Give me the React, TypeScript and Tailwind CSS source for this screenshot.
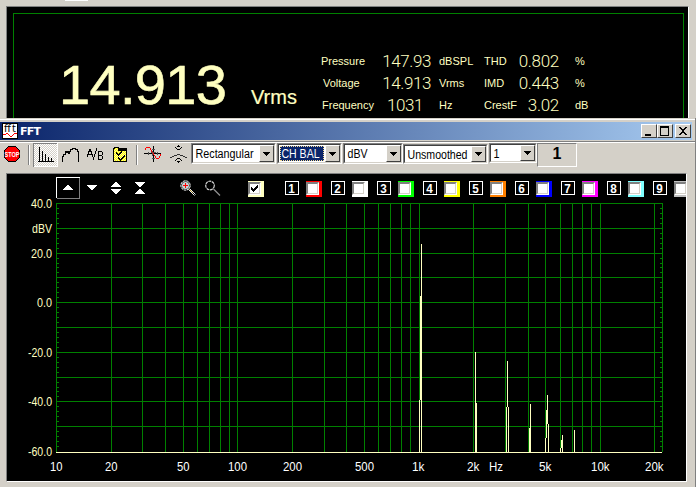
import React from "react";

const SANS = "font-['Liberation_Sans',Arial,sans-serif]";

const readings = [
  ["Pressure", "147.93", "dBSPL", "THD", "0.802", "%"],
  ["Voltage", "14.913", "Vrms", "IMD", "0.443", "%"],
  ["Frequency", "1031", "Hz", "CrestF", "3.02", "dB"],
];

const channels = [
  "bg-[#ff0000]",
  "bg-white",
  "bg-[#00ff00]",
  "bg-[#ffff00]",
  "bg-[#ff8000]",
  "bg-[#0000ff]",
  "bg-[#ff00ff]",
  "bg-[#80ffff]",
  "bg-[#c0c0c0]",
];

function Reading({ row, index }: { row: string[]; index: number }) {
  const inset = ["pl-0", "pl-[2px]", "pl-[1px]"][index];
  return (
    <div className="grid h-[22px] grid-cols-[60px_50px_8px_45px_32px_43px_17px_40px] items-center whitespace-nowrap text-[11px] leading-[22px]">
      <span className={inset}>{row[0]}</span>
      <span className={index === 2 ? "pr-[8px] text-right text-[17px] font-light tracking-[-0.4px] font-['Roboto',sans-serif]" : "text-right text-[17px] font-light tracking-[-0.4px] font-['Roboto',sans-serif]"}>{row[1]}</span>
      <span />
      <span>{row[2]}</span>
      <span>{row[3]}</span>
      <span className="text-right text-[17px] font-light tracking-[-0.3px] font-['Roboto',sans-serif]">{row[4]}</span>
      <span />
      <span className="-ml-px">{row[5]}</span>
    </div>
  );
}

function TitleButton({ children }: { children: React.ReactNode }) {
  return (
    <div className="h-[14px] w-[16px] border border-t-white border-l-white border-r-[#404040] border-b-[#404040] bg-[#d4d0c8]">
      <svg width="14" height="12" viewBox="0 0 14 12" shapeRendering="crispEdges" className="block">
        {children}
      </svg>
    </div>
  );
}

function Combo({ box, label, selected = false }: { box: string; label: React.ReactNode; selected?: boolean }) {
  return (
    <div className={`flex shrink-0 border border-t-[#808080] border-l-[#808080] border-r-white border-b-white ${box}`}>
      <div className="flex min-w-0 flex-1 border border-t-[#404040] border-l-[#404040] border-r-[#d4d0c8] border-b-[#d4d0c8] bg-white">
        <div className={selected ? "m-px flex min-w-0 flex-1 items-center border border-dotted border-[#f5db95] bg-[#0a246a] text-white" : "flex min-w-0 flex-1 items-center pl-[2px] text-black"}>
          {label}
        </div>
        <div className="flex w-[15px] shrink-0 items-center justify-center border border-t-white border-l-white border-r-[#404040] border-b-[#404040] bg-[#d4d0c8]">
          <svg width="7" height="4" viewBox="0 0 7 4" shapeRendering="crispEdges">
            <path d="M0 0h7v1h-1v1h-1v1h-1v1h-1v-1h-1v-1h-1v-1h-1z" />
          </svg>
        </div>
      </div>
    </div>
  );
}

function ComboText({ text, width, size = 12.5 }: { text: string; width: number; size?: number }) {
  return (
    <svg width={width + 1} height="15" className="block shrink-0 overflow-visible">
      <text x="0.5" y="12" fontSize={size} fill="currentColor" textLength={width} lengthAdjust="spacingAndGlyphs">
        {text}
      </text>
    </svg>
  );
}

function CheckSquare({ color, checked = false }: { color: string; checked?: boolean }) {
  return (
    <div className={`h-[16px] w-[16px] shrink-0 pt-px ${color}`}>
      <div className="h-[13px] w-[13px] border border-t-[#808080] border-l-[#808080] border-r-white border-b-white">
        <div className="h-[11px] w-[11px] border border-t-[#808080] border-l-[#808080] border-r-[#d4d0c8] border-b-[#d4d0c8] bg-white">
          {checked && (
            <svg width="9" height="9" viewBox="0 0 9 9" shapeRendering="crispEdges" className="block">
              <path d="M1 3h1v1h1v1h1v-1h1v-1h1v-1h1v-1h1v3h-1v1h-1v1h-1v1h-1v1h-1v-1h-1v-1h-1z" />
            </svg>
          )}
        </div>
      </div>
    </div>
  );
}

function Toolbar() {
  return (
    <div className="flex h-[30px] items-start">
      <svg width="191" height="30" viewBox="0 143 191 30" shapeRendering="crispEdges" className="block shrink-0">
        <defs>
          <pattern id="check" width="2" height="2" patternUnits="userSpaceOnUse">
            <rect width="2" height="2" fill="#d4d0c8" />
            <rect width="1" height="1" fill="#fff" />
            <rect x="1" y="1" width="1" height="1" fill="#fff" />
          </pattern>
          <pattern id="yellow" width="2" height="2" patternUnits="userSpaceOnUse">
            <rect width="2" height="2" fill="#ffff00" />
            <rect width="1" height="1" fill="#fff7a0" />
            <rect x="1" y="1" width="1" height="1" fill="#fff7a0" />
          </pattern>
        </defs>
        <path d="M8.5 146.5h7l4 4v7l-4 4h-7l-4-4v-7z" fill="#f00" stroke="#000" />
        <text x="4.5" y="157" fontSize="8" fontWeight="bold" fill="#fff" textLength="15" lengthAdjust="spacingAndGlyphs">STOP</text>
        <path d="M28.5 145v20M136.5 145v20" stroke="#808080" />
        <path d="M29.5 145v20M137.5 145v20" stroke="#fff" />
        <rect x="33" y="143" width="25" height="24" fill="url(#check)" />
        <path d="M33.5 167v-23.5H57" fill="none" stroke="#808080" />
        <path d="M34 166.5h23.5V144" fill="none" stroke="#fff" />
        <path d="M39.5 147v15M38 161.5h16M42.5 151v11M45.5 154v8M48.5 157v5M51.5 158v4" stroke="#000" fill="none" />
        <path d="M62.5 162v-6h1v-2h2v-3h1v1h1v-1h1v2h1v-2h1v-2h2v-1h3v1h2v2h1v11" fill="none" stroke="#000" />
        <path d="M87.5 157v-3h1v-3h1v-2h1v2h1v3h1v3M88 154.500h4" fill="none" stroke="#000" />
        <path d="M93 157h1v3h-1zM94 154h1v3h-1zM95 151h1v3h-1zM96 148h1v3h-1z" />
        <path d="M98.500 160v-9M98 151.500h4M98 155.500h4M98 159.500h4M102.500 152v3M102.500 156v3" fill="none" stroke="#000" />
        <path d="M113 148h1v-1h5v1h8v14h-14z" />
        <path d="M114 149h1v-1h3v2h8v11h-12z" fill="url(#yellow)" />
        <path d="M118 150h8v1h-8z" />
        <path d="M116 152h1v1h1v1h1v-1h1v-1h1v-1h1v2h-1v1h-1v1h-1v1h-1v-1h-1v-1h-1zM118 157h1v1h1v1h1v-1h1v-1h1v-1h1v-1h1v2h-1v1h-1v1h-1v1h-1v1h-1v-1h-1v-1h-1z" />
        <path d="M153.500 146v16M144 153.500h17" stroke="#000" />
        <path d="M152 149.500h3M152 158.500h3M148.500 152v3M157.500 152v3M152.500 151v5M151 152.500h5" stroke="#505050" />
        <g fill="#f00">
          <path d="M145 148h1v2h-1zM146 147h4v1h-4zM150 148h1v2h-1zM151 150h1v2h-1zM152 152h1v1h-1zM153 153h1v2h-1zM154 155h1v1h-1zM155 156h1v2h-1zM156 158h3v1h-3zM159 156h1v2h-1zM160 154h1v2h-1z" />
        </g>
        <path d="M170 157h2v1h-2zM172 156h2v1h-2zM174 155h3v1h-3zM177 154h3v1h-3zM180 155h3v1h-3zM183 156h2v1h-2zM185 157h2v1h-2z" fill="#303030" />
        <path d="M178 145h1v2h-1zM175 147h1v1h-1zM181 147h1v1h-1zM176 148h1v1h-1zM180 148h1v1h-1zM177 149h3v1h-3zM177 158h3v1h-3zM176 159h1v1h-1zM180 159h1v1h-1zM175 160h1v1h-1zM181 160h1v1h-1zM178 161h1v2h-1zM177 146h3v1h-3zM177 161h3v1h-3z" />
      </svg>
      <Combo box="h-[21px] w-[85px]" label={<ComboText text="Rectangular" width={58} />} />
      <Combo box="ml-px h-[21px] w-[65px]" label={<ComboText text="CH BAL" width={38} />} selected />
      <Combo box="ml-px h-[21px] w-[60px]" label={<ComboText text="dBV" width={20} />} />
      <Combo box="mt-px h-[20px] w-[85px]" label={<ComboText text="Unsmoothed" width={60} size={12} />} />
      <Combo box="ml-px h-[20px] w-[48px]" label={<ComboText text="1" width={6} />} />
      <div className="flex h-[24px] w-[40px] items-center justify-center border border-t-[#808080] border-l-[#808080] border-r-white border-b-white pb-[3px] text-[16px] font-bold leading-none">
        1
      </div>
    </div>
  );
}

function ScaleButtons() {
  return (
    <svg width="192" height="22" viewBox="56 177 192 22" shapeRendering="crispEdges" className="block shrink-0">
      <path d="M56.5 198v-20.500h23" fill="none" stroke="#fff" />
      <path d="M57 198.500h22.500V178" fill="none" stroke="#808080" />
      <g fill="#fff">
        <path d="M67 185h2v1h1v1h1v1h1v1h1v1H63v-1h1v-1h1v-1h1v-1h1z" />
        <path d="M87 185h10v1h-1v1h-1v1h-1v1h-1v1h-2v-1h-1v-1h-1v-1h-1v-1h-1z" />
        <path d="M115 182h2v1h1v1h1v1h1v1h1v1h-10v-1h1v-1h1v-1h1v-1h1zM111 189h10v1h-1v1h-1v1h-1v1h-1v1h-2v-1h-1v-1h-1v-1h-1v-1h-1z" />
        <path d="M135 182h10v1h-1v1h-1v1h-1v1h-1v1h-2v-1h-1v-1h-1v-1h-1v-1h-1zM139 189h2v1h1v1h1v1h1v1h1v1h-10v-1h1v-1h1v-1h1v-1h1z" />
      </g>
      <g shapeRendering="auto">
        <circle cx="185.500" cy="185.500" r="4.700" fill="#303c3c" stroke="#fff" strokeDasharray="2.500 0.700" />
        <circle cx="185.500" cy="185.500" r="3.500" fill="#c8d4d4" />
        <path d="M189.500 188.500l6 6M188.500 189.500l6 6" stroke="#e8e8e8" fill="none" />
        <path d="M189.500 189.500l3 3" stroke="#b09020" />
        <circle cx="210" cy="185.500" r="4.300" fill="#000" stroke="#d0d0d0" strokeWidth="1.200" strokeDasharray="3 0.600" />
        <path d="M213.500 189l6.500 6.500" stroke="#909090" strokeWidth="1.300" />
      </g>
      <path d="M185.500 183v5M183 185.500h5" stroke="#f00" />
    </svg>
  );
}

const LEFT = 56;
const DECADE = 181.25;
const freqX = (f: number) => Math.round(LEFT + Math.log10(f / 10) * DECADE);
const vertical: number[] = [];
for (const base of [10, 100, 1000]) {
  for (let m = 1; m < 10; m++) vertical.push(freqX(base * m));
}
vertical.push(600, 654, 662);
const horizontal = [203, 228, 253, 277, 302, 327, 352, 377, 401, 426];
const ticks: number[] = [];
[...horizontal, 451].forEach((y, i, all) => {
  if (i + 1 < all.length) for (let k = 1; k < 5; k++) ticks.push(Math.round(y + ((all[i + 1] - y) * k) / 5));
});

// Spectrum line segments: column, first row, row past the last.
const peaks = [
  [421, 244, 452], [420, 296, 400], [419, 400, 452],
  [475, 352, 452], [476, 403, 452],
  [507, 361, 407], [506, 407, 452], [508, 407, 452],
  [530, 404, 452], [529, 428, 452],
  [547, 395, 424], [546, 410, 438], [545, 438, 452], [548, 424, 452],
  [562, 435, 452], [561, 440, 448], [560, 448, 452],
  [574, 430, 452],
];

// Label text, left edge, drawn width.
const xLabels: [string, number, number][] = [
  ["10", 50, 12.5], ["20", 105, 12.5], ["50", 177, 12.5], ["100", 228, 19], ["200", 283, 19],
  ["500", 355, 19], ["1k", 412, 12.5], ["2k", 467, 12.5], ["Hz", 489, 14], ["5k", 539, 12.5],
  ["10k", 591, 18.5], ["20k", 645, 18.5],
];
const yLabels: [string, number, number][] = [
  ["40.0", 203, 21], ["dBV", 228, 20], ["20.0", 253, 21], ["0.0", 302, 15],
  ["-20.0", 352, 24], ["-40.0", 401, 24], ["-60.0", 451, 24],
];

function Spectrum() {
  return (
    <svg width="679" height="282" viewBox="7 199 679 282" className="block">
      <g fill="#008000" shapeRendering="crispEdges">
        {vertical.map((x) => <rect key={x} x={x} y="203" width="1" height="249" />)}
        {horizontal.map((y) => <rect key={y} x="56" y={y} width="607" height="1" />)}
        {ticks.map((y) => (
          <g key={y}>
            <rect x="57" y={y} width="2" height="1" />
            <rect x="660" y={y} width="2" height="1" />
          </g>
        ))}
      </g>
      <g fill="#ffffc0" shapeRendering="crispEdges">
        <rect x="56" y="452" width="606" height="1" />
        {peaks.map(([x, a, b]) => <rect key={`${x}-${a}`} x={x} y={a} width="1" height={b - a} />)}
      </g>
      <g fill="#ffffc0" fontSize="12.500">
        {yLabels.map(([t, y, w]) => (
          <text key={t} x={52 - w} y={y + 5} textLength={w} lengthAdjust="spacingAndGlyphs">{t}</text>
        ))}
      </g>
      <g fill="#fff" fontSize="12.500">
        {xLabels.map(([t, x, w]) => (
          <text key={t} x={x} y="471" textLength={w} lengthAdjust="spacingAndGlyphs">{t}</text>
        ))}
      </g>
    </svg>
  );
}

export default function App() {
  return (
    <div className={`flex h-[487px] w-[696px] flex-col overflow-hidden bg-[#d4d0c8] text-black ${SANS}`}>
      <div className="h-[118px] pl-[6px] pr-[6px]">
        <div className="h-[6px]"><div className="ml-[59px] h-px w-[23px] bg-white" /></div>
        <div className="h-[112px] w-[683px] border-t border-r border-l border-t-[#808080] border-r-white border-l-[#808080] bg-black px-[6px] pt-[6px]">
          <div className="flex h-[105px] w-[671px] border-t border-r border-l border-[#008000] text-[#ffffc0]">
            <div className="w-[237px] pt-[39px] pl-[45px] text-[56px] leading-[64px] tracking-[-0.7px] [-webkit-text-stroke:0.6px_#ffffc0]">14.913</div>
            <div className="w-[70px] pt-[71px] text-[20px] leading-[24px] [-webkit-text-stroke:0.2px_#ffffc0]">Vrms</div>
            <div className="pt-[36px]">
              {readings.map((r, i) => <Reading key={r[0]} row={r} index={i} />)}
            </div>
          </div>
        </div>
      </div>
      <div className="flex h-[369px] flex-col border-r border-[#808080]">
        <div className="mt-px h-px bg-white" />
        <div className="mt-[2px] mr-[3px] flex h-[18px] items-center bg-linear-to-r/srgb from-[#0a246a] to-[#a6caf0] pr-px pl-[2px]">
          <svg width="16" height="16" viewBox="0 0 16 16" shapeRendering="crispEdges" className="block">
            <path d="M0 0h16v16H0z" />
            <path d="M1 1h14v14H1z" fill="#fff" />
            <text x="2" y="9" fontSize="10" textLength="12" lengthAdjust="spacing" className="font-['DejaVu_Sans',sans-serif]">fft</text>
            <path d="M1 11.500h3M4 10.500h2M6 11.500h1M7 12.500h1M8 13.500h2M10 12.500h1M11 11.500h1M12 10.500h3" fill="none" stroke="#f00" />
          </svg>
          <span className="ml-[2px] flex-1 text-[11px] font-bold leading-none tracking-[-0.800px] text-white font-['DejaVu_Sans',sans-serif]">FFT</span>
          <div className="flex">
            <TitleButton><path d="M3 9h6v2H3z" /></TitleButton>
            <TitleButton><path d="M2 1h9v10H2zM3 3v7h7V3z" fillRule="evenodd" /></TitleButton>
            <div className="w-[2px]" />
            <TitleButton><path d="M3 2h2v1h1v1h2V3h1V2h2v1h-1v1H9v1H8v2h1v1h1v1h1v1H9V9H8V8H6v1H5v1H3V9h1V8h1V7h1V5H5V4H4V3H3z" /></TitleButton>
          </div>
        </div>
        <div className="mt-px h-px bg-[#808080]" />
        <div className="h-px bg-white" />
        <Toolbar />
        <div className="ml-[6px] h-[309px] w-[681px] overflow-hidden border border-t-[#808080] border-r-white border-b-white border-l-[#808080] bg-black">
          <div className="flex h-[25px] items-start overflow-hidden pt-[3px] pl-[49px]">
            <ScaleButtons />
            <div className="pt-[4px]"><CheckSquare color="bg-[#ffffc0]" checked /></div>
            <div className="ml-[21px] flex shrink-0 gap-[9px] pt-[4px]">
              {channels.map((color, i) => (
                <div key={color} className="flex shrink-0 gap-[7px]">
                  <div className="flex h-[14px] w-[14px] items-center justify-center border border-white text-[13px] font-bold leading-none text-white">
                    <span className="scale-x-90">{i + 1}</span>
                  </div>
                  <CheckSquare color={color} />
                </div>
              ))}
            </div>
          </div>
          <Spectrum />
        </div>
      </div>
    </div>
  );
}
